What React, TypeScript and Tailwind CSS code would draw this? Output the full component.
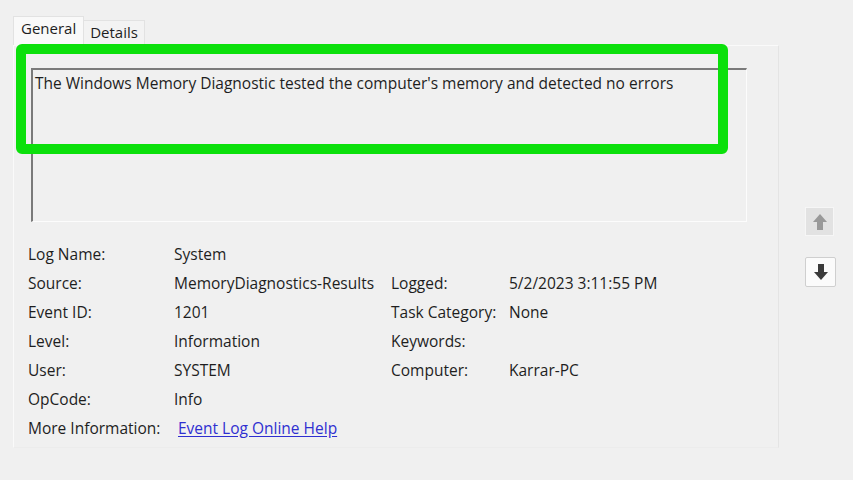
const rows: [string, React.ReactNode, string?, string?][] = [
  ["Log Name:", "System"],
  ["Source:", "MemoryDiagnostics-Results", "Logged:", "5/2/2023 3:11:55 PM"],
  ["Event ID:", "1201", "Task Category:", "None"],
  ["Level:", "Information", "Keywords:", ""],
  ["User:", "SYSTEM", "Computer:", "Karrar-PC"],
  ["OpCode:", "Info"],
];

function ArrowUp({ color }: { color: string }) {
  return (
    <svg width="16" height="18" viewBox="0 0 16 18">
      <path d="M8 1 L15 9 L11 9 L11 17 L5 17 L5 9 L1 9 Z" fill={color} />
    </svg>
  );
}

function ArrowDown({ color }: { color: string }) {
  return (
    <svg width="16" height="18" viewBox="0 0 16 18">
      <path d="M8 17 L15 9 L11 9 L11 1 L5 1 L5 9 L1 9 Z" fill={color} />
    </svg>
  );
}

export default function App() {
  return (
    <div
      className="relative w-[853px] h-[480px] bg-[#f0f0f0] text-[#1e1e1e] overflow-hidden flex"
      style={{ fontFamily: '"Open Sans", "Noto Sans", sans-serif' }}
    >
      {/* Left: tab control */}
      <div className="pl-[13px] pt-[16px] flex flex-col">
        <div className="flex items-end h-[29px] text-[15px]">
          <div className="h-[29px] px-[7px] bg-[#f9f9f9] border border-b-0 border-[#e2e2e2] flex items-center pb-[5px]">
            General
          </div>
          <div className="h-[25px] px-[6px] bg-[#f3f3f3] border border-b-0 border-l-0 border-[#e2e2e2] flex items-center pb-[2px]">
            Details
          </div>
        </div>
        <div className="w-[766px] h-[403px] bg-[#f0f0f0] border border-[#fafafa] border-r-[#e4e4e4] border-b-[#ececec] pl-[17px] pt-[22px]">
          {/* Description box */}
          <div className="w-[716px] h-[154px] border-l-2 border-t-2 border-[#7a7a7a] border-r border-b border-r-[#fcfcfc] border-b-[#fcfcfc] pl-[2px] pt-[2px] text-[15.5px]">
            The Windows Memory Diagnostic tested the computer's memory and detected no errors
          </div>
          {/* Details grid */}
          <div className="mt-[18px] -ml-[3px] text-[15.5px]">
            {rows.map(([l1, v1, l2, v2]) => (
              <div key={l1} className="flex h-[29px] items-center">
                <div className="w-[146px]">{l1}</div>
                <div className="w-[217px]">{v1}</div>
                <div className="w-[118px]">{l2}</div>
                <div>{v2}</div>
              </div>
            ))}
            <div className="flex h-[29px] items-center">
              <div className="w-[150px]">More Information:</div>
              <a className="text-[#2f2fd0] underline underline-offset-2">Event Log Online Help</a>
            </div>
          </div>
        </div>
      </div>

      {/* Right: navigation buttons */}
      <div className="ml-[26px] pt-[207px] flex flex-col gap-[21px]">
        <div className="w-[29px] h-[29px] bg-[#e2e2e2] border border-[#f6f6f6] flex items-center justify-center">
          <ArrowUp color="#999999" />
        </div>
        <div className="w-[31px] h-[30px] bg-[#fbfbfb] border border-[#cfcfcf] rounded-[2px] flex items-center justify-center">
          <ArrowDown color="#3a3a3a" />
        </div>
      </div>

      {/* Green highlight overlay */}
      <div className="absolute left-[16px] top-[44px] w-[712px] h-[110px] border-[10px] border-[#0be00b] rounded-[6px] pointer-events-none" />
    </div>
  );
}
